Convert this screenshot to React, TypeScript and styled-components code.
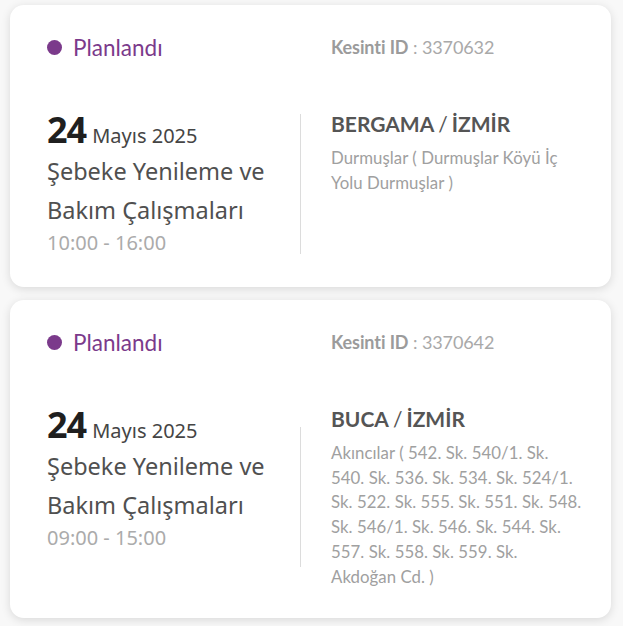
import React from "react";
import styled, { createGlobalStyle } from "styled-components";

const GlobalStyle = createGlobalStyle`
  html, body {
    margin: 0;
    padding: 0;
    background: #f8f8f8;
  }
  * { box-sizing: border-box; }
`;

const List = styled.div`
  display: flex;
  flex-direction: column;
  gap: 13px;
  padding: 5px 12px 10px 10px;
`;

const Card = styled.article`
  width: 601px;
  background: #ffffff;
  border-radius: 14px;
  box-shadow: 0 2px 10px rgba(0, 0, 0, 0.13);
  padding: 28px 20px 29px 37px;
`;

const Header = styled.div`
  display: grid;
  grid-template-columns: 284px 1fr;
  align-items: center;
  height: 28px;
`;

const Status = styled.div`
  display: flex;
  align-items: center;
  gap: 11px;
  font-family: Lato, "Noto Sans", sans-serif;
  font-size: 22.5px;
  color: #7b3a8b;
`;

const Dot = styled.span`
  width: 15px;
  height: 15px;
  border-radius: 50%;
  background: #7b3a8b;
  flex: 0 0 auto;
`;

const OutageId = styled.div`
  font-family: Lato, "Noto Sans", sans-serif;
  font-size: 18px;
  color: #a9a9a9;
  letter-spacing: -0.1px;
`;

const IdLabel = styled.b`
  font-weight: 700;
  color: #9b9b9b;
`;

const Body = styled.div`
  display: flex;
  align-items: flex-start;
  margin-top: 49px;
`;

const LeftCol = styled.div`
  flex: 0 0 253px;
  padding-bottom: 3px;
  font-family: "Noto Sans", sans-serif;
`;

const DateLine = styled.div`
  display: flex;
  align-items: baseline;
  gap: 6px;
  height: 42px;
  line-height: 40px;
`;

const Day = styled.span`
  font-size: 36px;
  font-weight: 700;
  color: #1f1f1f;
  letter-spacing: -1px;
`;

const MonthYear = styled.span`
  font-size: 20px;
  color: #454545;
`;

const Title = styled.div`
  font-size: 23.5px;
  line-height: 39px;
  color: #505050;
`;

const Hours = styled.div`
  font-size: 20px;
  line-height: 25px;
  color: #ababab;
`;

const Divider = styled.div`
  flex: 0 0 1px;
  align-self: center;
  height: 140px;
  background: #dcdcdc;
`;

const RightCol = styled.div`
  flex: 1;
  margin-left: 30px;
  font-family: Lato, "Noto Sans", sans-serif;
`;

const Place = styled.div`
  font-size: 21px;
  font-weight: 700;
  line-height: 28px;
  color: #555555;
`;

const Slash = styled.span`
  font-weight: 400;
  margin: 0 4px;
`;

const Streets = styled.div`
  margin-top: 8px;
  max-width: 254.5px;
  font-size: 16.8px;
  letter-spacing: 0.05px;
  line-height: 24.7px;
  color: #a0a0a0;
`;

type Outage = {
  id: string;
  day: string;
  monthYear: string;
  title: string;
  hours: string;
  district: string;
  city: string;
  streets: string;
};

const outages: Outage[] = [
  {
    id: "3370632",
    day: "24",
    monthYear: "Mayıs 2025",
    title: "Şebeke Yenileme ve Bakım Çalışmaları",
    hours: "10:00 - 16:00",
    district: "BERGAMA",
    city: "İZMİR",
    streets: "Durmuşlar ( Durmuşlar Köyü İç Yolu Durmuşlar )",
  },
  {
    id: "3370642",
    day: "24",
    monthYear: "Mayıs 2025",
    title: "Şebeke Yenileme ve Bakım Çalışmaları",
    hours: "09:00 - 15:00",
    district: "BUCA",
    city: "İZMİR",
    streets:
      "Akıncılar ( 542. Sk. 540/1. Sk. 540. Sk. 536. Sk. 534. Sk. 524/1. Sk. 522. Sk. 555. Sk. 551. Sk. 548. Sk. 546/1. Sk. 546. Sk. 544. Sk. 557. Sk. 558. Sk. 559. Sk. Akdoğan Cd. )",
  },
];

function OutageCard({ o }: { o: Outage }) {
  return (
    <Card>
      <Header>
        <Status>
          <Dot />
          Planlandı
        </Status>
        <OutageId>
          <IdLabel>Kesinti ID</IdLabel> : {o.id}
        </OutageId>
      </Header>
      <Body>
        <LeftCol>
          <DateLine>
            <Day>{o.day}</Day>
            <MonthYear>{o.monthYear}</MonthYear>
          </DateLine>
          <Title>{o.title}</Title>
          <Hours>{o.hours}</Hours>
        </LeftCol>
        <Divider />
        <RightCol>
          <Place>
            {o.district}
            <Slash>/</Slash>
            {o.city}
          </Place>
          <Streets>{o.streets}</Streets>
        </RightCol>
      </Body>
    </Card>
  );
}

export default function App() {
  return (
    <>
      <GlobalStyle />
      <List>
        {outages.map((o) => (
          <OutageCard key={o.id} o={o} />
        ))}
      </List>
    </>
  );
}
